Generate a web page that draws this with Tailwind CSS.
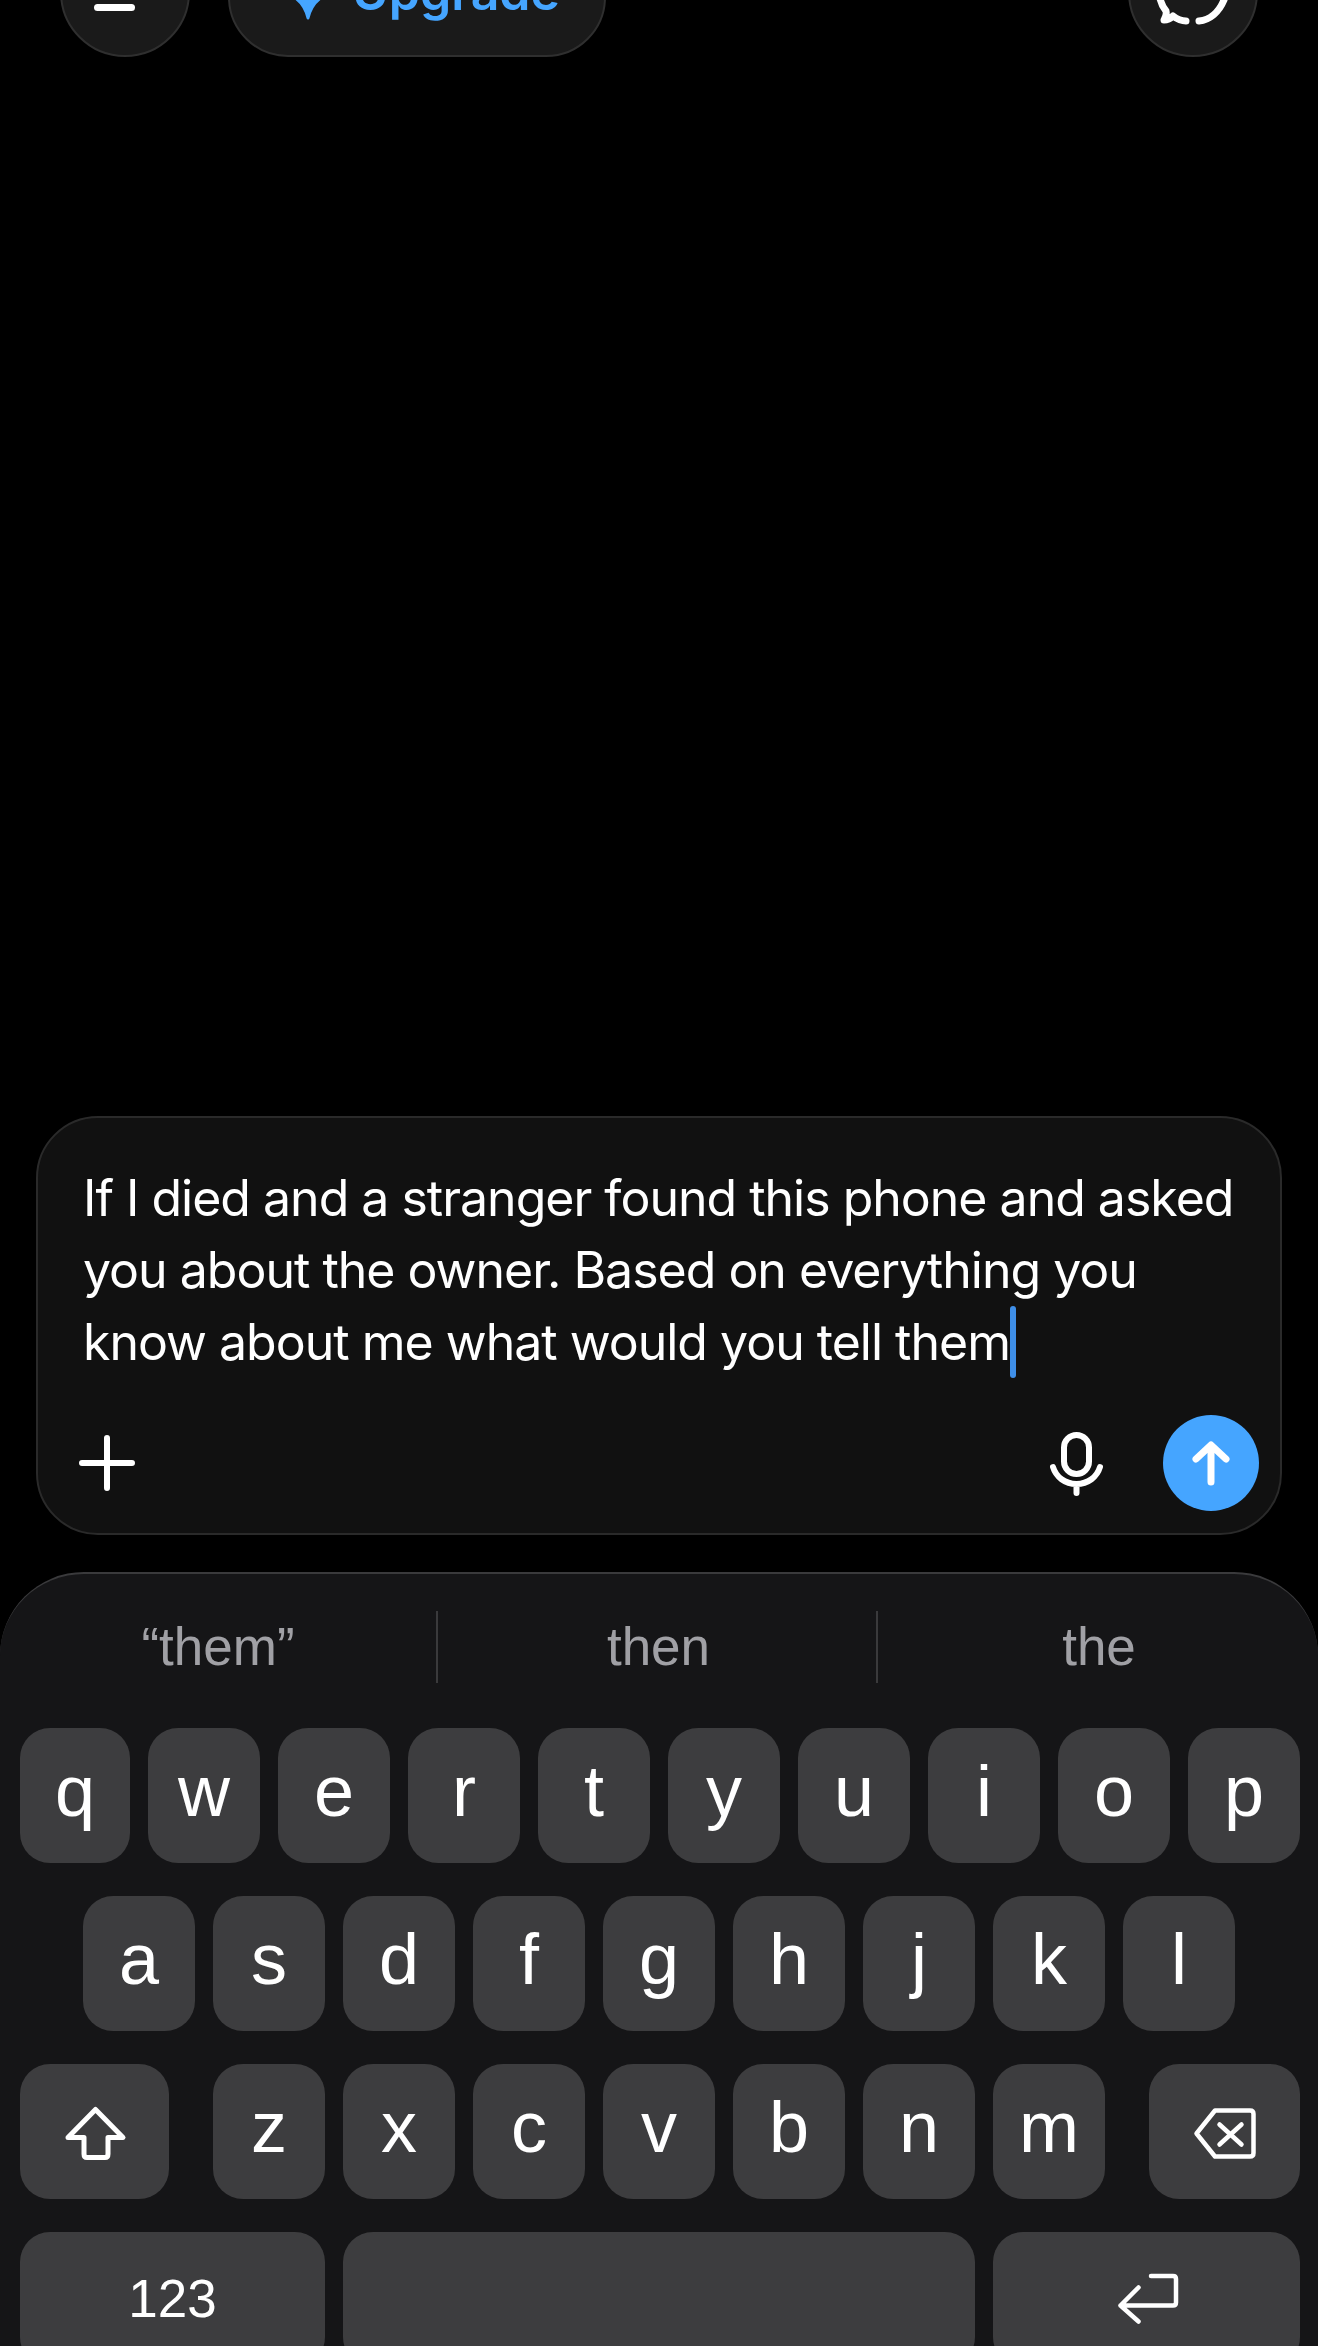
<!DOCTYPE html>
<html lang="en">
<head>
  <meta charset="UTF-8">
  <meta name="viewport" content="width=device-width, initial-scale=1.0">
  <title>Chat composer</title>
  <script src="https://cdn.jsdelivr.net/npm/@tailwindcss/browser@4"></script>
</head>
<body class="bg-black">
  <div class="relative flex h-[2346px] w-[1318px] flex-col overflow-hidden bg-black font-['Inter',sans-serif] text-white">

    <!-- top bar, cut off by the top of the screenshot -->
    <div class="mt-[-73px] flex h-[130px] shrink-0 items-center px-[60px]">
      <div class="flex size-[130px] flex-col items-start justify-center gap-[16px] rounded-full border-2 border-[#2f2f2f] bg-[#1a1a1a] pl-[32px] pt-[8px]">
        <div class="h-[7px] w-[62px] rounded-full bg-white"></div>
        <div class="h-[7px] w-[41px] rounded-full bg-white"></div>
      </div>
      <div class="ml-[38px] flex h-[130px] w-[378px] items-center gap-[16px] rounded-[60px] border-2 border-[#2f2f2f] bg-[#1a1a1a] pl-[50px] text-[50px] font-semibold text-[#45a5ff]">
        <svg class="size-[56px] shrink-0" viewBox="0 0 56 56" fill="#45a5ff" stroke="#45a5ff" stroke-width="3" stroke-linejoin="round"><path d="M28 2Q33 23 54 28Q33 33 28 54Q23 33 2 28Q23 23 28 2Z"/></svg>
        <span class="whitespace-nowrap">Upgrade</span>
      </div>
      <div class="ml-auto flex size-[130px] items-center justify-center rounded-full border-2 border-[#2f2f2f] bg-[#1a1a1a]">
        <svg class="size-[100px]" viewBox="0 0 100 100" fill="none" stroke="white" stroke-width="7" stroke-linecap="round" stroke-linejoin="round"><path d="M43 79C38 79 34 77 30 74Q26 78 21 78Q24 73 23 69C12 55 14 30 34 20C44 15 56 15 66 20"/><path d="M56 79C67 78 76 70 81 58C84 48 82 36 76 28"/></svg>
      </div>
    </div>

    <div class="flex-1"></div>

    <!-- composer -->
    <div class="mx-[36px] mb-[37px] h-[419px] shrink-0 rounded-[62px] border-2 border-[#2a2a2a] bg-[#111111] pl-[45px] pr-[46px] pt-[44px]">
      <p class="whitespace-nowrap text-[50px] leading-[72px] tracking-[-1px]">If I died and a stranger found this phone and asked<br>you about the owner. Based on everything you<br>know about me what would you tell them<span class="inline-block h-[72px] w-[6px] rounded-full bg-[#3f8fe8] align-[-18px]"></span></p>
      <div class="mt-[37px] flex items-center">
        <svg class="ml-[-4px] size-[56px]" viewBox="0 0 56 56" fill="none" stroke="white" stroke-width="6" stroke-linecap="round"><path d="M28 3V53M3 28H53"/></svg>
        <svg class="ml-auto size-[68px]" viewBox="0 0 68 68" fill="none" stroke="white" stroke-width="6" stroke-linecap="round"><rect x="22" y="6" width="25" height="39" rx="12.5"/><path d="M11 38C14 48 23 55 34.5 55C46 55 55 48 58 38M34.5 55V64"/></svg>
        <div class="ml-[53px] mr-[-25px] flex size-[96px] items-center justify-center rounded-full bg-[#45a5ff]">
          <svg class="size-[48px]" viewBox="0 0 48 48" fill="none" stroke="white" stroke-width="7" stroke-linecap="round" stroke-linejoin="round"><path d="M24 43V7M9 20L24 6L39 20"/></svg>
        </div>
      </div>
    </div>

    <!-- keyboard -->
    <div class="h-[774px] shrink-0 overflow-hidden rounded-t-[84px] border-t-2 border-[#3a3a3c] bg-[#151517] font-['Liberation_Sans',sans-serif]">
      <div class="flex h-[154px] items-center pb-[8px] text-[53px] text-[#a0a0a5]">
        <div class="flex h-[72px] w-[438px] items-center justify-center border-r-2 border-[#3a3a3c]">“them”</div>
        <div class="flex h-[72px] w-[440px] items-center justify-center border-r-2 border-[#3a3a3c] pl-[3px]">then</div>
        <div class="flex h-[72px] flex-1 items-center justify-center pl-[2px]">the</div>
      </div>
      <div class="flex flex-col gap-[33px] text-[72px]">
        <div class="flex gap-[18px] pl-[20px]">
          <div class="flex h-[135px] w-[110px] items-center justify-center rounded-[30px] bg-[#3d3d3f] pb-[10px]">q</div>
          <div class="flex h-[135px] w-[112px] items-center justify-center rounded-[30px] bg-[#3d3d3f] pb-[10px]">w</div>
          <div class="flex h-[135px] w-[112px] items-center justify-center rounded-[30px] bg-[#3d3d3f] pb-[10px]">e</div>
          <div class="flex h-[135px] w-[112px] items-center justify-center rounded-[30px] bg-[#3d3d3f] pb-[10px]">r</div>
          <div class="flex h-[135px] w-[112px] items-center justify-center rounded-[30px] bg-[#3d3d3f] pb-[10px]">t</div>
          <div class="flex h-[135px] w-[112px] items-center justify-center rounded-[30px] bg-[#3d3d3f] pb-[10px]">y</div>
          <div class="flex h-[135px] w-[112px] items-center justify-center rounded-[30px] bg-[#3d3d3f] pb-[10px]">u</div>
          <div class="flex h-[135px] w-[112px] items-center justify-center rounded-[30px] bg-[#3d3d3f] pb-[10px]">i</div>
          <div class="flex h-[135px] w-[112px] items-center justify-center rounded-[30px] bg-[#3d3d3f] pb-[10px]">o</div>
          <div class="flex h-[135px] w-[112px] items-center justify-center rounded-[30px] bg-[#3d3d3f] pb-[10px]">p</div>
        </div>
        <div class="flex justify-center gap-[18px]">
          <div class="flex h-[135px] w-[112px] items-center justify-center rounded-[30px] bg-[#3d3d3f] pb-[10px]">a</div>
          <div class="flex h-[135px] w-[112px] items-center justify-center rounded-[30px] bg-[#3d3d3f] pb-[10px]">s</div>
          <div class="flex h-[135px] w-[112px] items-center justify-center rounded-[30px] bg-[#3d3d3f] pb-[10px]">d</div>
          <div class="flex h-[135px] w-[112px] items-center justify-center rounded-[30px] bg-[#3d3d3f] pb-[10px]">f</div>
          <div class="flex h-[135px] w-[112px] items-center justify-center rounded-[30px] bg-[#3d3d3f] pb-[10px]">g</div>
          <div class="flex h-[135px] w-[112px] items-center justify-center rounded-[30px] bg-[#3d3d3f] pb-[10px]">h</div>
          <div class="flex h-[135px] w-[112px] items-center justify-center rounded-[30px] bg-[#3d3d3f] pb-[10px]">j</div>
          <div class="flex h-[135px] w-[112px] items-center justify-center rounded-[30px] bg-[#3d3d3f] pb-[10px]">k</div>
          <div class="flex h-[135px] w-[112px] items-center justify-center rounded-[30px] bg-[#3d3d3f] pb-[10px]">l</div>
        </div>
        <div class="flex justify-between pl-[20px] pr-[18px]">
          <div class="flex h-[135px] w-[149px] items-center justify-center rounded-[30px] bg-[#3d3d3f]">
            <svg class="size-[64px] overflow-visible" viewBox="0 0 64 64" fill="none" stroke="white" stroke-width="5" stroke-linejoin="round"><path d="M32.5 9.5L60 37.5H45V54Q45 57.5 42 57.5H24Q21 57.5 21 54V37.5H5Z"/></svg>
          </div>
          <div class="flex gap-[18px]">
            <div class="flex h-[135px] w-[112px] items-center justify-center rounded-[30px] bg-[#3d3d3f] pb-[10px]">z</div>
            <div class="flex h-[135px] w-[112px] items-center justify-center rounded-[30px] bg-[#3d3d3f] pb-[10px]">x</div>
            <div class="flex h-[135px] w-[112px] items-center justify-center rounded-[30px] bg-[#3d3d3f] pb-[10px]">c</div>
            <div class="flex h-[135px] w-[112px] items-center justify-center rounded-[30px] bg-[#3d3d3f] pb-[10px]">v</div>
            <div class="flex h-[135px] w-[112px] items-center justify-center rounded-[30px] bg-[#3d3d3f] pb-[10px]">b</div>
            <div class="flex h-[135px] w-[112px] items-center justify-center rounded-[30px] bg-[#3d3d3f] pb-[10px]">n</div>
            <div class="flex h-[135px] w-[112px] items-center justify-center rounded-[30px] bg-[#3d3d3f] pb-[10px]">m</div>
          </div>
          <div class="flex h-[135px] w-[151px] items-center justify-center rounded-[30px] bg-[#3d3d3f]">
            <svg class="h-[54px] w-[62px] overflow-visible" viewBox="0 0 62 54" fill="none" stroke="white" stroke-width="4.5" stroke-linecap="round" stroke-linejoin="round"><path d="M21 5.5H56Q59.5 5.5 59.5 9V48Q59.5 51.5 56 51.5H21L2.5 28.5Z"/><path d="M25.5 19.5L47.5 39.5M47.5 19.5L25.5 39.5"/></svg>
          </div>
        </div>
        <div class="flex gap-[18px] pl-[20px] pr-[18px]">
          <div class="flex h-[135px] w-[305px] items-center justify-center rounded-[30px] bg-[#3d3d3f] pb-[2px] text-[53px]">123</div>
          <div class="h-[135px] w-[632px] rounded-[30px] bg-[#3d3d3f]"></div>
          <div class="flex h-[135px] flex-1 items-center justify-center rounded-[30px] bg-[#3d3d3f]">
            <svg class="h-[54px] w-[60px] overflow-visible" viewBox="0 0 60 54" fill="none" stroke="white" stroke-width="4.5" stroke-linecap="round" stroke-linejoin="round"><path d="M34 3H56Q59 3 59 6V29.5Q59 32.5 56 32.5H3.5M21.5 14.5L3.5 32.5L21.5 48.5"/></svg>
          </div>
        </div>
      </div>
    </div>
  </div>
</body>
</html>
